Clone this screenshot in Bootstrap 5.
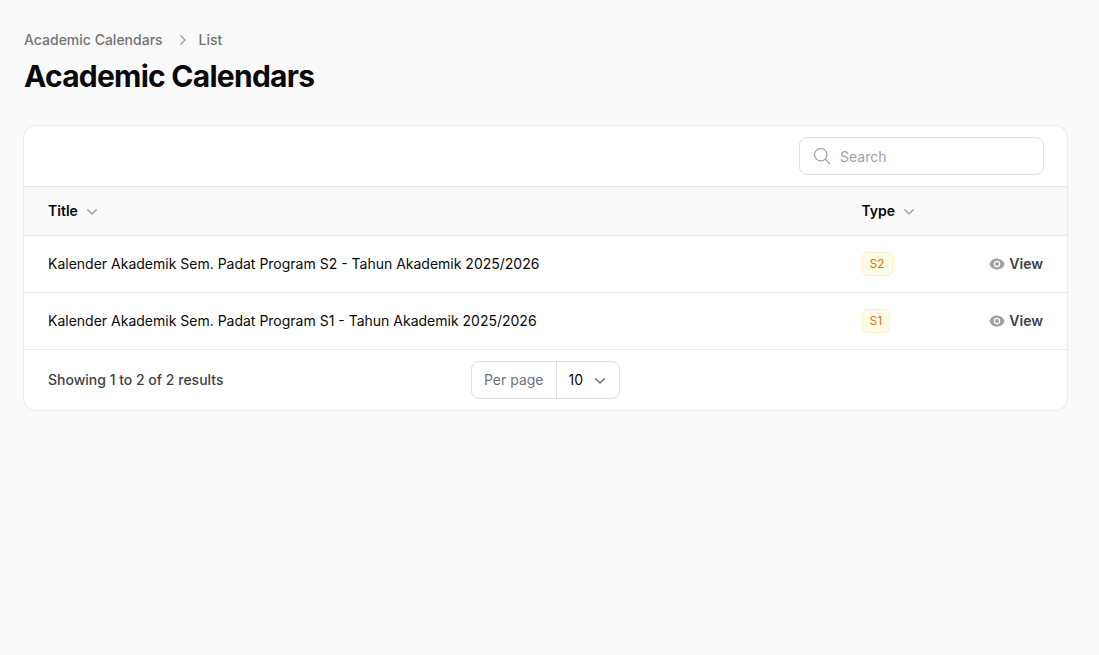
<!DOCTYPE html>
<html lang="en">
<head>
<meta charset="utf-8">
<title>Academic Calendars</title>
<link href="https://cdn.jsdelivr.net/npm/bootstrap@5.3.0/dist/css/bootstrap.min.css" rel="stylesheet">
<style>
html,body{height:100%}
body{background:#fafafa;font-family:Inter,"Liberation Sans",sans-serif;font-size:14px;color:#09090b;line-height:20px}
.shell{padding:30px 32px 0 24px}
.crumbs{height:20px;color:#737373;font-weight:500;font-size:14px}
.crumbs svg{width:20px;height:20px;fill:#a3a3a3;margin:0 7px 0 9px}
.page-title{font-size:30px;line-height:36px;font-weight:700;letter-spacing:-.75px;color:#09090b;margin:8px 0 32px}
.panel{background:#fff;box-shadow:0 0 0 1px #ececee;border-radius:12px;overflow:hidden}
.toolbar{height:61px;padding:0 23px 1px 24px;border-bottom:1px solid #e7e7e9}
.searchbox{width:245px;height:38px;border:1px solid #e2e2e5;border-radius:8px;padding:0 12px;background:#fff}
.searchbox svg{width:20px;height:20px;fill:none;stroke:#a1a1aa;stroke-width:1.5;stroke-linecap:round;stroke-linejoin:round;flex:none}
.searchbox input{border:0;outline:0;padding:2px 0 0;width:100%;font:400 14px/20px Inter,"Liberation Sans",sans-serif;color:#09090b;background:transparent}
.searchbox input::placeholder{color:#a1a1aa;opacity:1}
.datatable{margin:0;width:100%;table-layout:fixed;border-collapse:collapse}
.datatable th,.datatable td{padding:0;border-bottom:1px solid #e7e7e9;vertical-align:middle;background:transparent;box-shadow:none}
.datatable th{height:48px;background:#fafafa;font-weight:600;color:#09090b}
.datatable td{height:57px;font-weight:400;color:#09090b}
.c-title{padding-left:24px!important}
.c-type{width:101.5px}
.c-act{width:104px;padding-right:24px!important;text-align:right}
.sorter svg{width:20px;height:20px;fill:#a1a1aa;margin-left:4px}
.tag{display:inline-block;height:24px;padding:0 7px;border:1px solid #fdf0c4;border-radius:6px;background:#fefce8;color:#d97706;font-size:12px;font-weight:400;line-height:22px}
.viewlink{color:#3f3f46;font-weight:600;text-decoration:none;gap:4px;vertical-align:middle}
.viewlink svg{width:16px;height:16px;fill:#a1a1aa}
.tablefoot{height:60px;padding:0 24px;display:grid;grid-template-columns:1fr auto 1fr;align-items:center;color:#3f3f46;font-weight:500}
.perpage{height:38px;border:1px solid #e2e2e5;border-radius:8px;background:#fff}
.perpage .lbl{padding:0 12px;color:#71717a;font-weight:400;border-right:1px solid #e2e2e5;height:100%}
.perpage .val{padding:0 9px 0 12px;color:#09090b;font-weight:400;height:100%;gap:7px}
.perpage svg{width:20px;height:20px;fill:#71717a}
</style>
</head>
<body>
<main class="shell">
  <nav class="crumbs d-flex align-items-center">
    <span>Academic Calendars</span>
    <svg viewBox="0 0 20 20"><path fill-rule="evenodd" d="M8.22 5.22a.75.75 0 0 1 1.06 0l4.25 4.25a.75.75 0 0 1 0 1.06l-4.25 4.25a.75.75 0 0 1-1.06-1.06L11.94 10 8.22 6.28a.75.75 0 0 1 0-1.06Z"/></svg>
    <span>List</span>
  </nav>
  <h1 class="page-title">Academic Calendars</h1>
  <section class="panel">
    <div class="toolbar d-flex align-items-center justify-content-end">
      <label class="searchbox d-flex align-items-center gap-2">
        <svg viewBox="0 0 24 24"><path d="m21 21-5.197-5.197m0 0A7.5 7.5 0 1 0 5.196 5.196a7.5 7.5 0 0 0 10.607 10.607Z"/></svg>
        <input type="search" placeholder="Search" aria-label="Search">
      </label>
    </div>
    <table class="table datatable">
      <thead>
        <tr>
          <th class="c-title"><span class="sorter d-inline-flex align-items-center">Title<svg viewBox="0 0 20 20"><path fill-rule="evenodd" d="M5.22 8.22a.75.75 0 0 1 1.06 0L10 11.94l3.72-3.72a.75.75 0 1 1 1.06 1.06l-4.25 4.25a.75.75 0 0 1-1.06 0L5.22 9.28a.75.75 0 0 1 0-1.06Z"/></svg></span></th>
          <th class="c-type"><span class="sorter d-inline-flex align-items-center">Type<svg viewBox="0 0 20 20"><path fill-rule="evenodd" d="M5.22 8.22a.75.75 0 0 1 1.06 0L10 11.94l3.72-3.72a.75.75 0 1 1 1.06 1.06l-4.25 4.25a.75.75 0 0 1-1.06 0L5.22 9.28a.75.75 0 0 1 0-1.06Z"/></svg></span></th>
          <th class="c-act"></th>
        </tr>
      </thead>
      <tbody>
        <tr>
          <td class="c-title">Kalender Akademik Sem. Padat Program S2 - Tahun Akademik 2025/2026</td>
          <td><span class="tag">S2</span></td>
          <td class="c-act"><a class="viewlink d-inline-flex align-items-center" href="#"><svg viewBox="0 0 20 20"><path d="M10 12.5a2.5 2.5 0 1 0 0-5 2.5 2.5 0 0 0 0 5Z"/><path fill-rule="evenodd" d="M.664 10.59a1.651 1.651 0 0 1 0-1.186A10.004 10.004 0 0 1 10 3c4.257 0 7.893 2.66 9.336 6.41.147.381.146.804 0 1.186A10.004 10.004 0 0 1 10 17c-4.257 0-7.893-2.66-9.336-6.41ZM14 10a4 4 0 1 1-8 0 4 4 0 0 1 8 0Z"/></svg>View</a></td>
        </tr>
        <tr>
          <td class="c-title">Kalender Akademik Sem. Padat Program S1 - Tahun Akademik 2025/2026</td>
          <td><span class="tag">S1</span></td>
          <td class="c-act"><a class="viewlink d-inline-flex align-items-center" href="#"><svg viewBox="0 0 20 20"><path d="M10 12.5a2.5 2.5 0 1 0 0-5 2.5 2.5 0 0 0 0 5Z"/><path fill-rule="evenodd" d="M.664 10.59a1.651 1.651 0 0 1 0-1.186A10.004 10.004 0 0 1 10 3c4.257 0 7.893 2.66 9.336 6.41.147.381.146.804 0 1.186A10.004 10.004 0 0 1 10 17c-4.257 0-7.893-2.66-9.336-6.41ZM14 10a4 4 0 1 1-8 0 4 4 0 0 1 8 0Z"/></svg>View</a></td>
        </tr>
      </tbody>
    </table>
    <div class="tablefoot">
      <span>Showing 1 to 2 of 2 results</span>
      <div class="perpage d-flex align-items-center">
        <span class="lbl d-flex align-items-center">Per page</span>
        <span class="val d-flex align-items-center">10<svg viewBox="0 0 20 20"><path fill-rule="evenodd" d="M5.22 8.22a.75.75 0 0 1 1.06 0L10 11.94l3.72-3.72a.75.75 0 1 1 1.06 1.06l-4.25 4.25a.75.75 0 0 1-1.06 0L5.22 9.28a.75.75 0 0 1 0-1.06Z"/></svg></span>
      </div>
      <span></span>
    </div>
  </section>
</main>
<script src="https://cdn.jsdelivr.net/npm/bootstrap@5.3.0/dist/js/bootstrap.bundle.min.js"></script>
</body>
</html>
